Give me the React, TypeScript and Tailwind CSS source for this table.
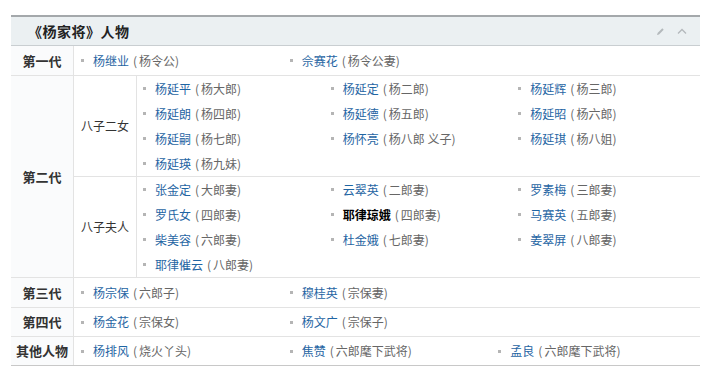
import React from "react";

type Person = { name: string; note: string; plain?: boolean };

const p = (name: string, note: string, plain?: boolean): Person => ({ name, note, plain });

const sons: Person[] = [
  p("杨延平", "杨大郎"),
  p("杨延定", "杨二郎"),
  p("杨延辉", "杨三郎"),
  p("杨延朗", "杨四郎"),
  p("杨延德", "杨五郎"),
  p("杨延昭", "杨六郎"),
  p("杨延嗣", "杨七郎"),
  p("杨怀亮", "杨八郎 义子"),
  p("杨延琪", "杨八姐"),
  p("杨延瑛", "杨九妹"),
];

const wives: Person[] = [
  p("张金定", "大郎妻"),
  p("云翠英", "二郎妻"),
  p("罗素梅", "三郎妻"),
  p("罗氏女", "四郎妻"),
  p("耶律琼娥", "四郎妻", true),
  p("马赛英", "五郎妻"),
  p("柴美容", "六郎妻"),
  p("杜金娥", "七郎妻"),
  p("姜翠屏", "八郎妻"),
  p("耶律催云", "八郎妻"),
];

const rows: { label: string; items: Person[]; h: string }[] = [
  { label: "第三代", items: [p("杨宗保", "六郎子"), p("穆桂英", "宗保妻")], h: "h-[30px]" },
  { label: "第四代", items: [p("杨金花", "宗保女"), p("杨文广", "宗保子")], h: "h-[29px]" },
  {
    label: "其他人物",
    items: [p("杨排风", "烧火丫头"), p("焦赞", "六郎麾下武将"), p("孟良", "六郎麾下武将")],
    h: "h-[28px]",
  },
];

function Item({ person, pad }: { person: Person; pad: string }) {
  return (
    <div className={"flex items-center whitespace-nowrap " + pad}>
      <span className="w-[3px] h-[3px] bg-[#b5b5b5] mr-[9px] shrink-0" />
      {person.plain ? (
        <span className="font-bold text-black">{person.name}</span>
      ) : (
        <span className="text-[#1f65a3]">{person.name}</span>
      )}
      <span className="text-[#666] ml-[4px]">
        (<span className="ml-[2px]">{person.note}</span>)
      </span>
    </div>
  );
}

function Label({ children, bold = true }: { children: React.ReactNode; bold?: boolean }) {
  return (
    <div
      className={
        "w-[63px] shrink-0 border-r border-[#e3e3e3] flex items-center justify-center text-[#333] " +
        (bold ? "font-bold text-[13px] bg-[#fafbfc]" : "text-[12px]")
      }
    >
      {children}
    </div>
  );
}

export default function App() {
  return (
    <div
      className="bg-white w-[714px] h-[377px] pt-[15px] pl-[11px] text-[12px]"
      style={{ fontFamily: '"Noto Sans CJK SC", "Liberation Sans", sans-serif' }}
    >
      <div className="w-[689px] border-t-2 border-t-[#a4a8ab] border-b border-b-[#c8c8c8]">
        {/* title bar */}
        <div className="h-[29px] bg-[#ebf0f2] border-b border-[#c9ced1] flex items-center pl-[17px] pr-[13px]">
          <span className="font-bold text-[14px] text-[#222] tracking-[0.5px]">《杨家将》人物</span>
          <div className="ml-auto flex items-center gap-[12px]">
            <svg width="9" height="9" viewBox="0 0 9 9">
              <path d="M1 8 L1.6 6 L6.3 1.3 L7.7 2.7 L3 7.4 Z" fill="#b4b9bc" />
            </svg>
            <svg width="10" height="7" viewBox="0 0 10 7">
              <path d="M1 5.5 L5 1.5 L9 5.5" fill="none" stroke="#b4b9bc" strokeWidth="1.3" />
            </svg>
          </div>
        </div>

        {/* 第一代 */}
        <div className="h-[30px] flex border-b border-[#e3e3e3]">
          <Label>第一代</Label>
          <div className="flex-1 grid grid-cols-3">
            <Item person={p("杨继业", "杨令公")} pad="pl-[7px]" />
            <Item person={p("佘赛花", "杨令公妻")} pad="pl-[7px]" />
          </div>
        </div>

        {/* 第二代 */}
        <div className="flex border-b border-[#e3e3e3]">
          <Label>第二代</Label>
          <div className="flex-1 flex flex-col">
            <div className="flex border-b border-[#e3e3e3]">
              <Label bold={false}>八子二女</Label>
              <div className="flex-1 grid grid-cols-3 auto-rows-[25px]">
                {sons.map((s) => (
                  <Item key={s.name} person={s} pad="pl-[6px]" />
                ))}
              </div>
            </div>
            <div className="flex">
              <Label bold={false}>八子夫人</Label>
              <div className="flex-1 grid grid-cols-3 auto-rows-[25px]">
                {wives.map((s) => (
                  <Item key={s.name} person={s} pad="pl-[6px]" />
                ))}
              </div>
            </div>
          </div>
        </div>

        {rows.map((r, i) => (
          <div
            key={r.label}
            className={"flex " + r.h + (i < rows.length - 1 ? " border-b border-[#e3e3e3]" : "")}
          >
            <Label>{r.label}</Label>
            <div className="flex-1 grid grid-cols-3">
              {r.items.map((s) => (
                <Item key={s.name} person={s} pad="pl-[7px]" />
              ))}
            </div>
          </div>
        ))}
      </div>
    </div>
  );
}
